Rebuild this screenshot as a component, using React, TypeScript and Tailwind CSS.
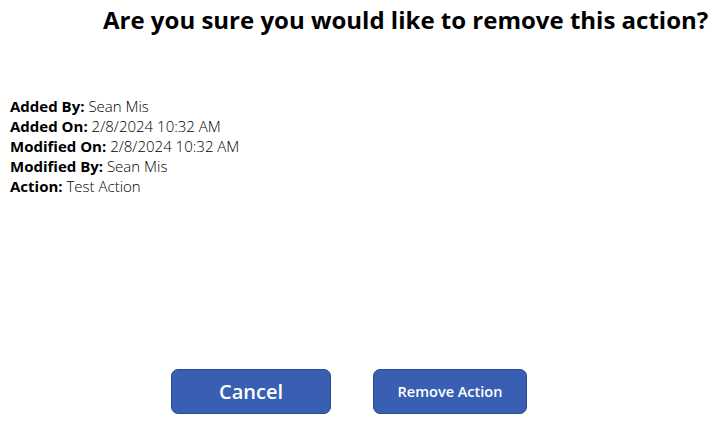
export default function App() {
  const rows = [
    ["Added By:", "Sean Mis"],
    ["Added On:", "2/8/2024 10:32 AM"],
    ["Modified On:", "2/8/2024 10:32 AM"],
    ["Modified By:", "Sean Mis"],
    ["Action:", "Test Action"],
  ];

  return (
    <div className="w-[719px] h-[428px] bg-white text-black font-['Open_Sans',sans-serif] flex flex-col">
      <h1 className="pl-[103px] pt-[4px] text-[24px] leading-[32px] font-bold whitespace-nowrap">
        Are you sure you would like to remove this action?
      </h1>

      <div className="mt-[60px] pl-[10px] text-[15px] leading-[20px] text-black">
        {rows.map(([label, value]) => (
          <div key={label}>
            <span className="font-bold">{label}</span> <span className="font-light">{value}</span>
          </div>
        ))}
      </div>

      <div className="mt-auto mb-[14px] flex items-center gap-[42px] pl-[171px]">
        <button className="w-[160px] h-[45px] rounded-[7px] bg-[#395fb3] border border-[#2b4b94] text-white text-[20px] font-semibold">
          Cancel
        </button>
        <button className="w-[154px] h-[45px] rounded-[7px] bg-[#395fb3] border border-[#2b4b94] text-white text-[14.5px] font-semibold">
          Remove Action
        </button>
      </div>
    </div>
  );
}
